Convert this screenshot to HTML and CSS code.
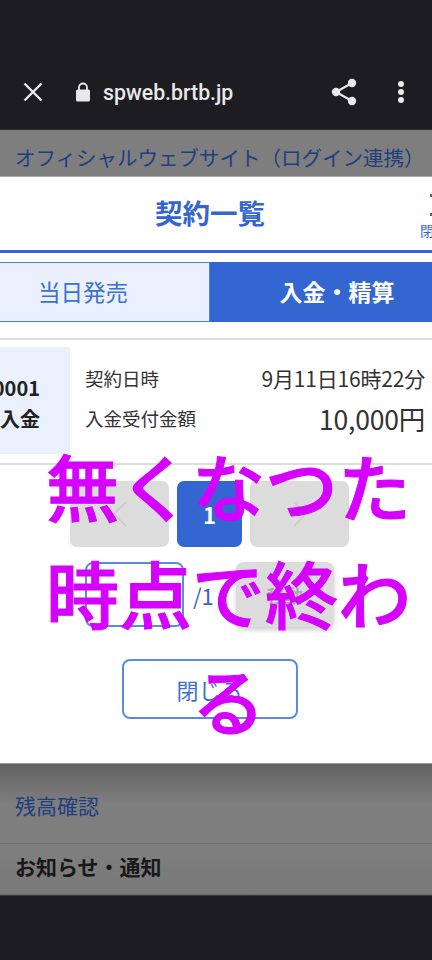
FILE: index.html
```html
<!DOCTYPE html>
<html lang="ja">
<head>
<meta charset="utf-8">
<title>契約一覧</title>
<link rel="stylesheet" href="styles.css">
</head>
<body>
<div class="screen">
  <header class="topbar">
    <svg class="ic-close" width="24" height="24" viewBox="0 0 24 24"><path d="M3.5 3.5 20.5 20.5M20.5 3.5 3.5 20.5" stroke="#e8e8e8" stroke-width="2.4" fill="none"/></svg>
    <svg class="ic-lock" width="16" height="20" viewBox="0 0 16 20"><path d="M4 8V5.5a4 4 0 0 1 8 0V8" stroke="#e8e8e8" stroke-width="1.8" fill="none"/><rect x="1" y="7.5" width="14" height="12" rx="1.6" fill="#e8e8e8"/></svg>
    <span class="url">spweb.brtb.jp</span>
    <svg class="ic-share" width="26" height="28" viewBox="0 0 26 28"><path d="M21 5 5 14 21 23" stroke="#e8e8e8" stroke-width="2.2" fill="none"/><circle cx="21" cy="5" r="4.2" fill="#e8e8e8"/><circle cx="5" cy="14" r="4.2" fill="#e8e8e8"/><circle cx="21" cy="23" r="4.2" fill="#e8e8e8"/></svg>
    <svg class="ic-more" width="8" height="22" viewBox="0 0 8 22"><circle cx="4" cy="3" r="3" fill="#e8e8e8"/><circle cx="4" cy="11" r="3" fill="#e8e8e8"/><circle cx="4" cy="19" r="3" fill="#e8e8e8"/></svg>
  </header>

  <div class="back-top">オフィシャルウェブサイト（ログイン連携）</div>

  <main class="modal">
    <div class="modal-head">
      <h1 class="title">契約一覧</h1>
      <div class="head-close"><i class="dot"></i><i class="dot"></i><span>閉じる</span></div>
    </div>
    <div class="tabs">
      <div class="tab tab-off">当日発売</div>
      <div class="tab tab-on">入金・精算</div>
    </div>
    <div class="record">
      <div class="rec-id"><span>000001</span><span>入金</span></div>
      <div class="rec-body">
        <div class="rec-line"><span class="lab">契約日時</span><span class="val">9月11日16時22分</span></div>
        <div class="rec-line"><span class="lab">入金受付金額</span><span class="val big">10,000円</span></div>
      </div>
    </div>
    <div class="pager">
      <div class="pg pg-grey"><svg width="14" height="26" viewBox="0 0 14 26"><path d="M13 1 1 13 13 25" stroke="#c8c8c8" stroke-width="1.5" fill="none"/></svg></div>
      <div class="pg pg-cur">1</div>
      <div class="pg pg-grey"><svg width="14" height="26" viewBox="0 0 14 26"><path d="M1 1 13 13 1 25" stroke="#c8c8c8" stroke-width="1.5" fill="none"/></svg></div>
    </div>
    <div class="jump">
      <div class="jump-input"></div>
      <span class="jump-total">/1</span>
      <div class="jump-go">移動</div>
    </div>
    <div class="close-btn">閉じる</div>
  </main>

  <div class="back-bottom">
    <div class="link-row">残高確認</div>
    <div class="news-row">お知らせ・通知</div>
  </div>
  <div class="navbar"></div>

  <div class="caption">無くなつた時点で終わる</div>
</div>
</body>
</html>
```
FILE: styles.css
```css
* { box-sizing: border-box; }
html, body { margin: 0; padding: 0; }
body { font-family: "Noto Sans CJK JP", "Noto Sans", sans-serif; background: #1c1c21; }
.screen { position: relative; width: 432px; height: 960px; overflow: hidden; display: flex; flex-direction: column; }

.topbar { height: 130px; flex: none; background: #1c1c21; border-bottom: 1px solid #2b2b2f; display: flex; align-items: center; padding: 54px 0 0 21px; }
.ic-close { flex: none; }
.ic-lock { flex: none; margin-left: 30px; }
.url { font-family: Roboto, sans-serif; font-weight: 500; font-size: 21.3px; color: #e8e8e8; margin-left: 12px; padding-top: 2px; flex: 1; }
.ic-share { flex: none; }
.ic-more { flex: none; margin: 0 27px 0 40px; }

.back-top { height: 47px; flex: none; background: #7e7e7e; color: #1d3f80; font-size: 20.5px; line-height: 27px; padding: 14px 0 0 15px; white-space: nowrap; border-bottom: 1px solid #a8a8a8; }

.modal { height: 586px; flex: none; background: #fff; width: 432px; padding-right: 13px; display: flex; flex-direction: column; align-items: center; position: relative; }
.modal-head { width: 432px; height: 76px; flex: none; align-self: flex-start; border-bottom: 3px solid #3366d1; padding: 0 12px 3px 0; position: relative; display: flex; justify-content: center; align-items: center; }
.title { margin: 0; font-size: 27.5px; font-weight: 700; color: #3366d1; line-height: 1.2; }
.head-close { position: absolute; left: 420px; top: 0; width: 12px; height: 73px; overflow: hidden; color: #3366d1; font-size: 14px; line-height: 18px; white-space: nowrap; }
.dot { position: absolute; right: 0; width: 2px; height: 3px; background: #3366d1; }
.dot:nth-child(1) { top: 17px; }
.dot:nth-child(2) { top: 36px; }
.head-close span { position: absolute; left: 0; top: 44px; }

.tabs { display: flex; width: 508px; margin: 9px 0 0 -44px; flex: none; align-self: flex-start; height: 60px; }
.tab { width: 254px; display: flex; align-items: center; justify-content: center; line-height: 1; padding-bottom: 2px; }
.tab-off { background: #eaf1fd; color: #3b70d4; border: 1px solid #4f82dc; font-size: 22.5px; }
.tab-on { background: #3366d1; color: #fff; font-weight: 700; font-size: 23px; }

.record { width: 452px; height: 127px; margin: 16px 0 0 -10px; flex: none; align-self: flex-start; display: flex; border-top: 2px solid #dcdcdc; border-bottom: 2px solid #dcdcdc; padding-top: 7px; }
.rec-id { width: 80px; height: 107px; flex: none; background: #eaf1fd; display: flex; flex-direction: column; align-items: flex-end; padding: 25px 30px 0 0; font-size: 20px; font-weight: 700; line-height: 31px; color: #222; white-space: nowrap; overflow: hidden; }
.rec-id span { display: block; }
.rec-body { width: 340px; margin-left: 15px; padding-top: 11px; }
.rec-line { display: flex; justify-content: space-between; align-items: center; height: 40px; color: #333; }
.lab { font-size: 18.5px; }
.val { font-size: 21px; letter-spacing: -0.2px; }
.val.big { font-size: 26.5px; }

.pager { display: flex; gap: 8px; margin-top: 16px; flex: none; }
.pg { height: 66px; border-radius: 7px; display: flex; align-items: center; justify-content: center; }
.pg-grey { width: 99px; background: #dcdcdc; }
.pg-cur { width: 65px; background: #3366d1; color: #fff; font-weight: 700; font-size: 22px; }

.jump { display: flex; align-items: center; margin-top: 15px; flex: none; width: 249px; height: 65px; }
.jump-input { width: 99px; height: 65px; border: 2px solid #5a8be0; border-radius: 8px; }
.jump-total { color: #3366d1; font-size: 22px; margin-left: 9px; width: 43px; }
.jump-go { width: 98px; height: 65px; background: #dcdcdc; border-radius: 8px; box-shadow: 0 3px 5px rgba(0,0,0,.2); color: #aaa; font-size: 18px; font-weight: 700; display: flex; align-items: center; justify-content: center; }

.close-btn { width: 176px; height: 60px; margin-top: 32px; flex: none; border: 2px solid #5a8be0; border-radius: 8px; color: #3b70d4; font-size: 22px; display: flex; align-items: center; justify-content: center; }

.back-bottom { height: 132px; flex: none; background: linear-gradient(#636363, #7e7e7e 30%, #7e7e7e 70%, #777); display: flex; flex-direction: column; border-top: 1px solid #9a9a9a; }
.link-row { height: 80px; padding: 26px 0 0 15px; font-size: 21px; line-height: 30px; color: #1d3f80; border-bottom: 1px solid #707070; }
.news-row { flex: 1; padding: 5px 0 0 15px; font-size: 21px; line-height: 34px; font-weight: 700; color: #181818; border-bottom: 1px solid #6a6a6a; }
.navbar { flex: 1; background: #1c1c21; border-top: 1px solid #3a3a40; }

.caption { position: absolute; left: 36px; top: 431px; width: 385px; text-align: center; font-size: 73px; line-height: 107px; font-weight: 500; -webkit-text-stroke: 1px #d600ff; color: #d600ff; }
```
